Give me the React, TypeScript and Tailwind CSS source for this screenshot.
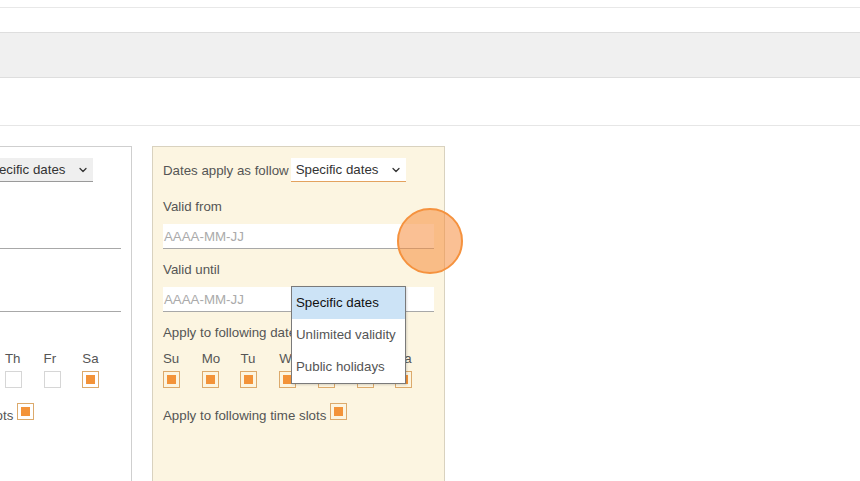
import React from 'react';
import { ChevronDown } from 'lucide-react';

const days = ['Su', 'Mo', 'Tu', 'We', 'Th', 'Fr', 'Sa'];

function Box({ on, warm }: { on: boolean; warm: boolean }) {
  return (
    <div
      className={
        'flex h-[17px] w-[17px] items-center justify-center border ' +
        (warm ? 'border-[#dcaa6c]' : 'border-[#d6d6d6]')
      }
    >
      {on && <div className="h-[9px] w-[9px] bg-[#f39339]" />}
    </div>
  );
}

function Panel({ warm, checked }: { warm: boolean; checked: boolean[] }) {
  return (
    <div
      className={
        'relative flex h-[360px] w-[293px] shrink-0 flex-col border px-[10px] pt-[11px] ' +
        (warm ? 'border-[#d9d2bf] bg-[#fcf5e1]' : 'border-[#cfcfcf] bg-white')
      }
    >
      <div className="flex h-[24px] items-center gap-[2px]">
        <span className="pt-[1px]">Dates apply as follow</span>
        <div
          className={
            'flex h-[24px] w-[115px] items-center justify-between border-b pl-[5px] pr-[4px] ' +
            (warm ? 'border-[#e3a25e] bg-white' : 'border-[#9a9a9a] bg-[#efefef]')
          }
        >
          <span className="pt-[1px] text-[#333]">Specific dates</span>
          <ChevronDown className="h-[12px] w-[12px] text-[#333]" strokeWidth={2.5} />
        </div>
      </div>

      <div className="mt-[17px]">Valid from</div>
      <div className="mt-[9px] flex h-[25px] w-[271px] items-center border-b border-[#a8a8a8] bg-white pl-[1px] pt-[1px] text-[#aaaaaa]">
        AAAA-MM-JJ
      </div>

      <div className="mt-[13px]">Valid until</div>
      <div className="mt-[9px] flex h-[25px] w-[271px] items-center border-b border-[#a8a8a8] bg-white pl-[1px] pt-[1px] text-[#aaaaaa]">
        AAAA-MM-JJ
      </div>

      <div className="mt-[13px]">Apply to following dates</div>
      <div className="mt-[10px] flex">
        {days.map((d, i) => (
          <div key={d} className="flex w-[38.8px] flex-col gap-[4px]">
            <span>{d}</span>
            <Box on={checked[i]} warm={warm || checked[i]} />
          </div>
        ))}
      </div>

      <div className="mt-[15px] flex items-start gap-[4px]">
        <span className="leading-[26px]">Apply to following time slots</span>
        <Box on warm />
      </div>

      {warm && (
        <div className="absolute left-[138px] top-[139px] z-10 flex w-[115px] flex-col border border-[#7a7a7a] bg-white shadow-[1px_1px_2px_rgba(0,0,0,0.15)]">
          <div className="flex h-[32px] items-center bg-[#cce3f6] pl-[4px] text-[#111]">Specific dates</div>
          <div className="flex h-[32px] items-center pl-[4px]">Unlimited validity</div>
          <div className="flex h-[32px] items-center pl-[4px]">Public holidays</div>
        </div>
      )}
    </div>
  );
}

export default function App() {
  return (
    <div className="relative h-[481px] w-[860px] overflow-hidden bg-white font-['Liberation_Sans',Arial,sans-serif] text-[13.3px] leading-[16px] text-[#555]">
      <div className="h-[7px]" />
      <div className="h-[25px] border-t border-[#e8e8e8]" />
      <div className="h-[46px] border-y border-[#dedede] bg-[#f0f0f0]" />
      <div className="h-[47px]" />
      <div className="h-[21px] border-t border-[#e6e6e6]" />

      <div className="flex gap-[20px] pl-[1px]">
        <div className="ml-[-162px]">
          <Panel warm={false} checked={[false, false, false, false, false, false, true]} />
        </div>
        <Panel warm checked={[true, true, true, true, true, true, true]} />
      </div>

      <div className="absolute left-[397px] top-[208px] h-[66px] w-[66px] rounded-full border-2 border-[#f5923e] bg-[rgba(245,140,60,0.55)]" />
    </div>
  );
}
